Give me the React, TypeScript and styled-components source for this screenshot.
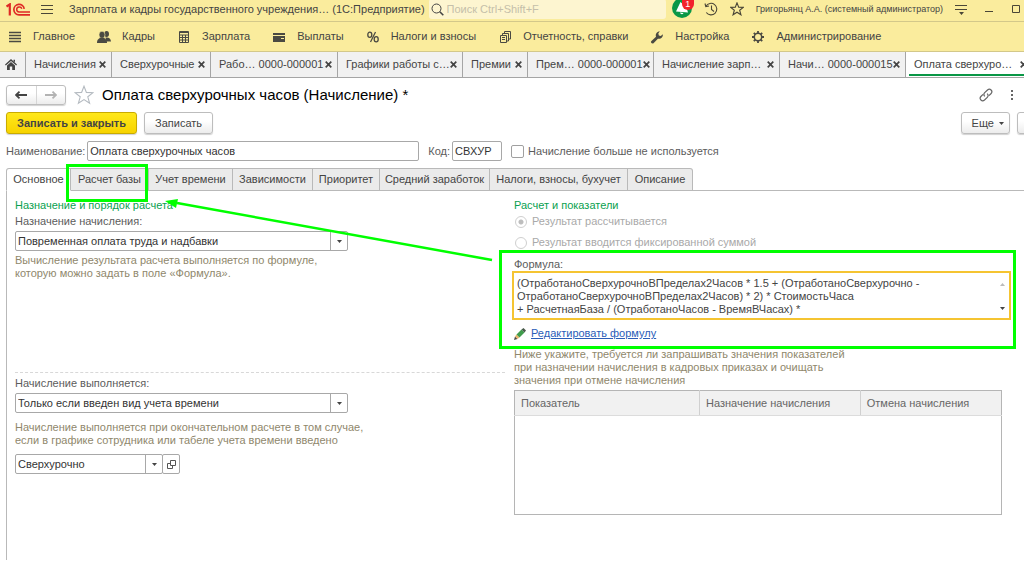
import React from "react";
import styled, { createGlobalStyle, css } from "styled-components";

const GlobalStyle = createGlobalStyle`
  *, *::before, *::after { box-sizing: border-box; }
  body {
    margin: 0;
    background: #fff;
    color: #444;
    font: 11px/13px "Liberation Sans", Arial, sans-serif;
    overflow: hidden;
  }
  button, input, select, textarea { font: inherit; color: inherit; margin: 0; }
`;

const Page = styled.div`
  min-height: 100vh;
  overflow: hidden;
`;

/* ---------- title bar ---------- */

const TitleBar = styled.header`
  display: flex;
  align-items: center;
  height: 22px;
  padding: 0 4px 3px 6px;
  background: #faec9d;
  border-bottom: 1px solid #d3c88a;
`;

const PlainButton = styled.button`
  display: grid;
  place-items: center;
  flex: none;
  padding: 0;
  border: 0;
  background: none;
  color: #4a4637;
`;

const MenuButton = styled(PlainButton)`
  margin: 0 16px 0 11px;
`;

const AppTitle = styled.div`
  flex: none;
  white-space: pre;
`;

const SearchBox = styled.label`
  display: flex;
  flex: 1;
  align-items: center;
  gap: 3px;
  min-width: 0;
  height: 20px;
  margin: 0 6px 0 4px;
  padding-left: 2px;
  background: #fdf5d0;
  border-radius: 3px;
`;

const SearchInput = styled.input`
  flex: 1;
  min-width: 0;
  padding: 0;
  border: 0;
  outline: 0;
  background: none;
  &::placeholder { color: #c5bfaa; opacity: 1; }
`;

const TitleActions = styled.div`
  display: flex;
  flex: none;
  align-items: center;
  gap: 12px;
`;

const UserName = styled.span`
  font-size: 9px;
  white-space: nowrap;
`;

const WindowButtons = styled.div`
  display: flex;
  gap: 19px;
  margin-left: 18px;
`;

const BellButton = styled(PlainButton)`
  position: relative;
`;

const Badge = styled.span`
  position: absolute;
  top: 1px;
  right: -2px;
  width: 12px;
  height: 10px;
  border-radius: 0 0 6px 6px;
  background: #f2222b;
  color: #fff;
  font-size: 9px;
  line-height: 9px;
  text-align: center;
`;

/* ---------- section menu ---------- */

const SectionMenu = styled.nav`
  display: flex;
  align-items: center;
  gap: 22px;
  height: 30px;
  padding: 0 8px;
  background: #faec9d;
  border-bottom: 1px solid #d3c88a;
`;

const SectionLink = styled.a`
  display: flex;
  flex: none;
  align-items: center;
  gap: 11px;
  color: #444;
  text-decoration: none;
  svg { color: #4a4a42; }
`;

/* ---------- open windows ---------- */

const WindowTabs = styled.div`
  display: flex;
  height: 26px;
  background: #f1f1f1;
  border-bottom: 1px solid #a5a5a5;
`;

const HomeButton = styled(PlainButton)`
  width: 26px;
  padding-right: 4px;
  border-right: 1px solid #a5a5a5;
`;

const WindowTab = styled.div<{ $basis: number; $active?: boolean }>`
  display: flex;
  flex: none;
  align-items: center;
  justify-content: space-between;
  width: ${(p) => p.$basis}px;
  padding: 0 5px 0 8px;
  border-right: 1px solid #a5a5a5;
  white-space: pre;
  ${(p) =>
    p.$active &&
    css`
      background: linear-gradient(#0a9746, #0a9746) 3px 22px / 100% 2px no-repeat #fff;
      border-right: 0;
    `}
`;

/* ---------- form header ---------- */

const Form = styled.main`
  padding-left: 6px;
`;

const FormHeader = styled.div`
  display: flex;
  align-items: center;
  height: 34px;
  padding-right: 7px;
`;

const buttonFace = css`
  border: 1px solid #bdbdbd;
  border-radius: 3px;
  background: linear-gradient(#fff 40%, #ececec);
  box-shadow: 0 1px 1px rgba(0, 0, 0, 0.18);
`;

const HistoryButtons = styled.div`
  ${buttonFace}
  display: flex;
  width: 60px;
  height: 20px;
`;

const HistoryButton = styled(PlainButton)<{ $muted?: boolean }>`
  flex: 1;
  color: ${(p) => (p.$muted ? "#b3b3b3" : "#444")};
  & + & { border-left: 1px solid #d6d6d6; }
`;

const StarButton = styled(PlainButton)`
  margin: 0 8px;
`;

const FormTitle = styled.h1`
  flex: 1;
  margin: 0;
  color: #000;
  font-size: 15px;
  line-height: 18px;
  font-weight: 400;
`;

const HeaderIcons = styled.div`
  display: flex;
  align-items: center;
  gap: 14px;
`;

const CommandBar = styled.div`
  display: flex;
  gap: 7px;
  height: 22px;
`;

const CommandButton = styled.button<{ $primary?: boolean }>`
  ${buttonFace}
  flex: none;
  padding: 0 10px;
  ${(p) =>
    p.$primary &&
    css`
      border-color: #c9ab00;
      background: linear-gradient(#ffe81a, #f7d300);
      font-weight: 700;
    `}
`;

const MoreButton = styled(CommandButton)`
  display: flex;
  align-items: center;
  gap: 5px;
  margin-left: auto;
  padding: 0 5px 0 10px;
`;

const ClippedButton = styled(CommandButton)`
  width: 20px;
  margin-right: -13px;
  padding: 0;
`;

const NameRow = styled.div`
  display: flex;
  align-items: center;
  height: 34px;
`;

const Field = styled.label`
  display: flex;
  align-items: center;
  color: #5c5c5c;
  white-space: nowrap;
`;

const boxFace = css`
  height: 20px;
  border: 1px solid #a8a8a8;
  border-radius: 2px;
  background: #fff;
  color: #333;
`;

const TextInput = styled.input<{ $w: number }>`
  ${boxFace}
  width: ${(p) => p.$w}px;
  padding: 0 2px;
  margin: 0 9px 0 2px;
`;

const CheckBox = styled.input`
  appearance: none;
  width: 13px;
  height: 13px;
  margin: 0 4px 0 0;
  border: 1px solid #a0a0a0;
  border-radius: 2px;
  background: #fff;
`;

/* ---------- page tabs ---------- */

const PageTabs = styled.div`
  display: flex;
  height: 23px;
`;

const PageTab = styled.button<{ $w: number; $active?: boolean }>`
  position: relative;
  flex: none;
  width: ${(p) => p.$w}px;
  padding: 0;
  border: 1px solid #b9b9b9;
  border-left-width: 0;
  background: #ebebeb;
  white-space: nowrap;
  &:first-child { border-left-width: 1px; border-top-left-radius: 3px; }
  &:last-child { border-top-right-radius: 3px; }
  ${(p) => p.$active && css`z-index: 1; background: #fff; border-bottom-color: #fff;`}
`;

const Highlight = styled.span`
  position: absolute;
  z-index: 2;
  border: 3px solid #0f0;
  pointer-events: none;
`;

const TabHighlight = styled(Highlight)`
  top: -27px;
  left: 59px;
  width: 82px;
  height: 38px;
`;

const FormulaHighlight = styled(Highlight)`
  inset: -8px -4px -9px -15px;
`;

const Panel = styled.section`
  position: relative;
  display: grid;
  grid-template-columns: minmax(0, 490fr) minmax(0, 498fr);
  gap: 9px;
  min-height: 370px;
  margin-top: -1px;
  padding: 8px 12px 0 8px;
  border: solid #b9b9b9;
  border-width: 1px 0 0 1px;
`;

const ArrowSvg = styled.svg`
  position: absolute;
  z-index: 2;
  left: 158px;
  top: 4px;
  pointer-events: none;
`;

const Column = styled.div`
  display: flex;
  flex-direction: column;
  align-items: flex-start;
`;

const GroupTitle = styled.h2`
  margin: 0 0 3px;
  color: #0a9f50;
  font: inherit;
`;

const Caption = styled.label`
  color: #5c5c5c;
`;

const Note = styled.p`
  margin: 0;
  color: #8f876c;
  white-space: pre-line;
`;

const TopGroup = styled.div`
  display: flex;
  flex-direction: column;
  align-items: flex-start;
  gap: 3px;
  width: 100%;
  height: 174px;
  border-bottom: 1px dashed #d8d8d8;
`;

const BottomGroup = styled.div`
  display: flex;
  flex-direction: column;
  align-items: flex-start;
  gap: 3px;
  padding-top: 4px;
`;

const SelectRow = styled.div`
  display: flex;
`;

const SelectFrame = styled.div<{ $w: number }>`
  display: grid;
  width: ${(p) => p.$w}px;
`;

const Select = styled.select`
  ${boxFace}
  grid-area: 1 / 1;
  appearance: none;
  padding: 0 20px 0 2px;
`;

const SelectArrow = styled.span`
  display: grid;
  grid-area: 1 / 1;
  place-items: center;
  justify-self: end;
  width: 18px;
  height: 20px;
  border-left: 1px solid #a8a8a8;
  pointer-events: none;
`;

const OpenButton = styled.button`
  ${boxFace}
  display: grid;
  place-items: center;
  width: 18px;
  margin-left: -1px;
  padding: 0;
`;

const BottomNote = styled(Note)`
  margin: 5px 0 4px;
`;

const RadioLabel = styled.label`
  display: flex;
  align-items: center;
  gap: 5px;
  height: 13px;
  margin-bottom: 8px;
  color: #a9a9a9;
`;

const Radio = styled.input`
  appearance: none;
  width: 12px;
  height: 12px;
  margin: 0 0 0 1px;
  border: 1px solid #cfcfcf;
  border-radius: 50%;
  &:checked { background: radial-gradient(circle, #bdbdbd 2px, #fff 3px); }
`;

const FormulaBlock = styled.div`
  position: relative;
  align-self: stretch;
  margin: 1px 0 8px;
`;

const FormulaBox = styled.div`
  display: flex;
  height: 49px;
  margin: 0 1px 0 -2px;
  border: 2px solid #f5c431;
  background: #fff;
`;

const FormulaInput = styled.textarea`
  flex: 1;
  min-width: 0;
  padding: 4px 3px 0;
  border: 0;
  outline: 0;
  resize: none;
  overflow: hidden;
  background: none;
  color: #444;
  white-space: pre;
`;

const ScrollMarks = styled.div`
  display: flex;
  flex-direction: column;
  justify-content: space-between;
  padding: 10px 4px 8px;
`;

const EditRow = styled.div`
  display: flex;
  align-items: center;
  gap: 5px;
  margin-top: 7px;
  a { color: #2a5db8; }
`;

const Table = styled.table`
  width: calc(100% - 10px);
  height: 125px;
  margin-top: 3px;
  border: 1px solid #b5b5b5;
  border-collapse: collapse;
  table-layout: fixed;
`;

const HeadCell = styled.th<{ $w?: string }>`
  width: ${(p) => p.$w ?? "auto"};
  height: 25px;
  padding: 0 6px;
  border-right: 1px solid #d0d0d0;
  border-bottom: 1px solid #dcdcdc;
  background: #f1f1f1;
  color: #666;
  font-weight: 400;
  text-align: left;
  &:last-child { border-right-color: #b5b5b5; }
`;

/* ---------- icons ---------- */

const CloseIcon = () => (
  <svg width="7" height="7" viewBox="0 0 7 7" stroke="#444" strokeWidth="1.7">
    <path d="M.7.7l5.6 5.6M6.3.7L.7 6.3" />
  </svg>
);

const Caret = ({ up, color = "#444" }: { up?: boolean; color?: string }) => (
  <svg width="5" height="3" viewBox="0 0 5 3" fill={color}>
    <path d={up ? "M0 3h5L2.5 0z" : "M0 0h5L2.5 3z"} />
  </svg>
);

const Logo = () => (
  <svg width="24" height="13" viewBox="0 0 24 13" fill="none" stroke="#df2a25">
    <path d="M.5 3.6L3.8 1.4V12.5" strokeWidth="2.2" />
    <path d="M18.2 5.8A5.2 5.2 0 1 0 13 11.8H24" strokeWidth="1.7" />
    <path d="M15.8 5.8A2.6 2.6 0 1 0 13 9.1H24" strokeWidth="1.5" />
  </svg>
);

const StarIcon = ({ size, color }: { size: number; color: string }) => (
  <svg width={size} height={size} viewBox="0 0 20 20" fill="none" stroke={color} strokeWidth={size > 15 ? 1.1 : 1.6}>
    <path d="M10 1.2l2.4 6.2 6.6.3-5.2 4.1 1.8 6.5L10 14.6l-5.6 3.7 1.8-6.5L1 7.7l6.6-.3z" />
  </svg>
);

const Arrow = ({ right }: { right?: boolean }) => (
  <svg width="12" height="8" viewBox="0 0 12 8" fill="none" stroke="currentColor" strokeWidth="1.8">
    <path d={right ? "M0 4h11M7.5 .7L11 4 7.5 7.3" : "M12 4H1M4.5 .7L1 4l3.5 3.3"} />
  </svg>
);

const sectionIcons: Record<string, React.ReactNode> = {
  main: <path d="M1 2.5h12M1 5.5h12M1 8.5h12M1 11.5h12" stroke="currentColor" strokeWidth="1.6" />,
  people: (
    <g fill="currentColor">
      <ellipse cx="9.6" cy="4" rx="2.4" ry="3" />
      <path d="M8.5 7.5c3-.5 5.2 .5 5.5 4H9z" />
      <ellipse cx="5" cy="4.8" rx="3" ry="3.6" stroke="#faec9d" strokeWidth=".6" />
      <path d="M0 13c0-3.5 1.5-4.3 3.6-5.3h2.8C8.5 8.7 10 9.5 10 13z" />
    </g>
  ),
  calc: (
    <g fill="none" stroke="currentColor">
      <path d="M2.5 1.5h9v11h-9zM2.5 2.5h9M2.5 5h9M5.5 5v7.5M8.5 5v7.5M2.5 7.5h9M2.5 10h9" />
    </g>
  ),
  card: (
    <g fill="currentColor">
      <path d="M1 3h12v2H1zM1 6h12v6H1z" />
      <path d="M9 8h3v1H9z" fill="#faec9d" />
    </g>
  ),
  percent: (
    <g fill="none" stroke="currentColor" strokeWidth="1.3">
      <ellipse cx="3.8" cy="4.8" rx="2" ry="2.6" />
      <ellipse cx="10.2" cy="9.2" rx="2" ry="2.6" />
      <path d="M9.5 2L4.5 12" />
    </g>
  ),
  reports: (
    <g fill="none" stroke="currentColor">
      <path d="M2.5 5.5h6v7h-6zM4.5 5V3.5h6V11H9M6.5 3V1.5h6V9H11M4 7.5h3M4 9.5h3" />
    </g>
  ),
  wrench: (
    <path
      d="M1.2 11.3L6 6.7C5.3 4.3 6.6 1.7 9.8 1.3L8.3 3.6l.6 1.8 1.9.5 2-1.7c.5 2.7-2 5.2-4.9 4.5L3.5 13.3C2 14 .3 12.6 1.2 11.3z"
      fill="currentColor"
    />
  ),
  gear: (
    <g fill="none" stroke="currentColor">
      <circle cx="7" cy="7" r="3.7" strokeWidth="1.5" />
      <path
        d="M7 1v2.2M7 10.8V13M1 7h2.2M10.8 7H13M2.8 2.8l1.5 1.5M9.7 9.7l1.5 1.5M11.2 2.8L9.7 4.3M4.3 9.7l-1.5 1.5"
        strokeWidth="1.8"
      />
    </g>
  ),
};

/* ---------- data ---------- */

const sections = [
  ["main", "Главное"],
  ["people", "Кадры"],
  ["calc", "Зарплата"],
  ["card", "Выплаты"],
  ["percent", "Налоги и взносы"],
  ["reports", "Отчетность, справки"],
  ["wrench", "Настройка"],
  ["gear", "Администрирование"],
];

const windows: [string, number][] = [
  ["Начисления", 86],
  ["Сверхурочные", 99],
  ["Рабо… 0000-000001", 127],
  ["Графики работы с…", 125],
  ["Премии", 65],
  ["Прем… 0000-000001", 126],
  ["Начисление зарп…", 126],
  ["Начи… 0000-000015", 126],
];

const pages: [string, number][] = [
  ["Основное", 65],
  ["Расчет базы", 78],
  ["Учет времени", 84],
  ["Зависимости", 80],
  ["Приоритет", 67],
  ["Средний заработок", 110],
  ["Налоги, взносы, бухучет", 138],
  ["Описание", 65],
];

const formula = `(ОтработаноСверхурочноВПределах2Часов * 1.5 + (ОтработаноСверхурочно -
ОтработаноСверхурочноВПределах2Часов) * 2) * СтоимостьЧаса
+ РасчетнаяБаза / (ОтработаноЧасов - ВремяВЧасах) *`;

function DropDown({ id, value, width, label }: { id: string; value: string; width: number; label?: string }) {
  return (
    <SelectFrame $w={width}>
      <Select id={id} aria-label={label} defaultValue={value}>
        <option>{value}</option>
      </Select>
      <SelectArrow><Caret /></SelectArrow>
    </SelectFrame>
  );
}

export default function App() {
  return (
    <Page>
      <GlobalStyle />
      <TitleBar>
        <Logo />
        <MenuButton aria-label="Меню">
          <svg width="12" height="9" stroke="currentColor">
            <path d="M0 .5h12M0 4.5h12M0 8.5h12" />
          </svg>
        </MenuButton>
        <AppTitle>Зарплата и кадры государственного учреждения… (1С:Предприятие)</AppTitle>
        <SearchBox>
          <svg width="13" height="13" viewBox="0 0 13 13" fill="none" stroke="#444">
            <circle cx="5.5" cy="5.5" r="4.5" />
            <path d="M8.8 8.8l3.5 3.5" strokeWidth="1.6" />
          </svg>
          <SearchInput placeholder="Поиск Ctrl+Shift+F" aria-label="Поиск" />
        </SearchBox>
        <TitleActions>
          <BellButton aria-label="Оповещения">
            <svg width="20" height="20" viewBox="0 0 20 20">
              <circle cx="10" cy="9" r="10" fill="#0a9746" />
              <path d="M8.5 3L4 12.5l12 1-1.5-5zM8 13.5l3.5.5c-.8 1.800-3 1.500-3.500-.5z" fill="#fff" />
            </svg>
            <Badge>1</Badge>
          </BellButton>
          <PlainButton aria-label="История">
            <svg width="14" height="14" viewBox="0 0 14 14" fill="none" stroke="currentColor" strokeWidth="1.1">
              <path d="M2 4.2A5.8 5.8 0 1 1 2.3 10.5M1 1.5l.8 3.2L5 4M7.5 3.5V7.5L10 9.5" />
            </svg>
          </PlainButton>
          <PlainButton aria-label="Избранное"><StarIcon size={14} color="#4a4637" /></PlainButton>
          <UserName>Григорьянц А.А. (системный администратор)</UserName>
          <PlainButton aria-label="Настройки окна">
            <svg width="12" height="12" viewBox="0 0 12 12" fill="currentColor">
              <path d="M0 2h12v1H0zM0 6h12v1H0zM4 9h5l-2.5 3z" />
            </svg>
          </PlainButton>
        </TitleActions>
        <WindowButtons>
          <PlainButton aria-label="Свернуть">
            <svg width="8" height="8" stroke="currentColor"><path d="M0 6.5h8" /></svg>
          </PlainButton>
          <PlainButton aria-label="Развернуть">
            <svg width="8" height="8" fill="none" stroke="currentColor"><path d="M.5.5h7v7h-7z" /></svg>
          </PlainButton>
        </WindowButtons>
      </TitleBar>

      <SectionMenu>
        {sections.map(([icon, text]) => (
          <SectionLink key={icon} href="#">
            <svg width="14" height="14" viewBox="0 0 14 14">{sectionIcons[icon]}</svg>
            {text}
          </SectionLink>
        ))}
      </SectionMenu>

      <WindowTabs>
        <HomeButton aria-label="Начальная страница">
          <svg width="12" height="11" viewBox="0 0 12 11" fill="#444">
            <path d="M6 0l6 5.5-.8.9L6 1.900.8 6.4 0 5.5zM8.5.7H10v2.5L8.5 2zM6 2.900l4 3.500V11H7.200V7.500H4.800V11H2V6.400z" />
          </svg>
        </HomeButton>
        {windows.map(([text, basis]) => (
          <WindowTab key={text} $basis={basis}>
            {text}
            <PlainButton aria-label="Закрыть"><CloseIcon /></PlainButton>
          </WindowTab>
        ))}
        <WindowTab $basis={126} $active>
          Оплата сверхуро…
          <PlainButton aria-label="Закрыть"><CloseIcon /></PlainButton>
        </WindowTab>
      </WindowTabs>

      <Form>
        <FormHeader>
          <HistoryButtons>
            <HistoryButton aria-label="Назад"><Arrow /></HistoryButton>
            <HistoryButton aria-label="Вперед" $muted><Arrow right /></HistoryButton>
          </HistoryButtons>
          <StarButton aria-label="В избранное"><StarIcon size={20} color="#b4bac0" /></StarButton>
          <FormTitle>Оплата сверхурочных часов (Начисление) *</FormTitle>
          <HeaderIcons>
            <PlainButton aria-label="Ссылка">
              <svg width="14" height="14" viewBox="0 0 14 14" fill="none" stroke="#666" strokeWidth="1.2">
                <path d="M5.8 8.3C4.5 7 4.8 5.6 5.7 4.7L8.5 2c2.5-2.2 5.8 1 3.6 3.5L10 7.6" />
                <path d="M8.2 5.7c1.3 1.3 1 2.700.1 3.600L5.5 12c-2.500 2.200-5.800-1-3.600-3.500L4 6.400" />
              </svg>
            </PlainButton>
            <PlainButton aria-label="Действия">
              <svg width="10" height="10" viewBox="0 0 10 10" fill="#666">
                <path d="M4 0h2v2H4zM4 4h2v2H4zM4 8h2v2H4z" />
              </svg>
            </PlainButton>
          </HeaderIcons>
        </FormHeader>

        <CommandBar>
          <CommandButton $primary>Записать и закрыть</CommandButton>
          <CommandButton>Записать</CommandButton>
          <MoreButton>Еще <Caret /></MoreButton>
          <ClippedButton aria-label="Справка" />
        </CommandBar>

        <NameRow>
          <Field>
            Наименование:
            <TextInput $w={332} defaultValue="Оплата сверхурочных часов" />
          </Field>
          <Field>
            Код:
            <TextInput $w={50} defaultValue="СВХУР" />
          </Field>
          <Field>
            <CheckBox type="checkbox" />
            Начисление больше не используется
          </Field>
        </NameRow>

        <PageTabs role="tablist">
          {pages.map(([text, width], i) => (
            <PageTab key={text} role="tab" aria-selected={i === 0} $w={width} $active={i === 0}>
              {text}
            </PageTab>
          ))}
        </PageTabs>

        <Panel>
          <TabHighlight />
          <ArrowSvg width="330" height="72" viewBox="0 0 330 72">
            <path d="M12 8L327 65" stroke="#0f0" strokeWidth="2.5" />
            <path d="M0 6L13 4L11 13z" fill="#0f0" />
          </ArrowSvg>
          <Column>
            <TopGroup>
              <div>
                <GroupTitle>Назначение и порядок расчета</GroupTitle>
                <Caption htmlFor="purpose">Назначение начисления:</Caption>
              </div>
              <DropDown id="purpose" value="Повременная оплата труда и надбавки" width={333} />
              <Note>{"Вычисление результата расчета выполняется по формуле,\nкоторую можно задать в поле «Формула»."}</Note>
            </TopGroup>
            <BottomGroup>
              <Caption htmlFor="mode">Начисление выполняется:</Caption>
              <DropDown id="mode" value="Только если введен вид учета времени" width={333} />
              <BottomNote>{"Начисление выполняется при окончательном расчете в том случае,\nесли в графике сотрудника или табеле учета времени введено"}</BottomNote>
              <SelectRow>
                <DropDown id="kind" label="Вид учета времени" value="Сверхурочно" width={148} />
                <OpenButton aria-label="Открыть">
                  <svg width="9" height="9" viewBox="0 0 9 9" fill="none" stroke="#555">
                    <path d="M3.5 .5h5v5h-5zM3 3.5H.5v5h5V6" />
                  </svg>
                </OpenButton>
              </SelectRow>
            </BottomGroup>
          </Column>
          <Column>
            <GroupTitle>Расчет и показатели</GroupTitle>
            <RadioLabel>
              <Radio type="radio" name="result" disabled defaultChecked />
              Результат рассчитывается
            </RadioLabel>
            <RadioLabel>
              <Radio type="radio" name="result" disabled />
              Результат вводится фиксированной суммой
            </RadioLabel>
            <FormulaBlock>
              <Caption htmlFor="formula">Формула:</Caption>
              <FormulaBox>
                <FormulaInput id="formula" defaultValue={formula} />
                <ScrollMarks>
                  <Caret up color="#bbb" />
                  <Caret />
                </ScrollMarks>
              </FormulaBox>
              <EditRow>
                <svg width="12" height="12" viewBox="0 0 12 12">
                  <path d="M0 12L1 8.5 3.5 11z" fill="#444" />
                  <path d="M1 8.5L2.5 6.5 5.5 9.5 3.5 11z" fill="#e8b46a" />
                  <path d="M2.5 6.5L7.5 1.5 10.5 4.5 5.5 9.5z" fill="#3f9c4c" />
                  <path d="M7.5 1.5L9.5 0 12 2.5 10.5 4.5z" fill="#4a5a4c" />
                </svg>
                <a href="#">Редактировать формулу</a>
              </EditRow>
              <FormulaHighlight />
            </FormulaBlock>
            <Note>{"Ниже укажите, требуется ли запрашивать значения показателей\nпри назначении начисления в кадровых приказах и очищать\nзначения при отмене начисления"}</Note>
            <Table>
              <thead>
                <tr>
                  <HeadCell $w="38%">Показатель</HeadCell>
                  <HeadCell $w="33%">Назначение начисления</HeadCell>
                  <HeadCell>Отмена начисления</HeadCell>
                </tr>
              </thead>
              <tbody>
                <tr><td colSpan={3} /></tr>
              </tbody>
            </Table>
          </Column>
        </Panel>
      </Form>
    </Page>
  );
}
